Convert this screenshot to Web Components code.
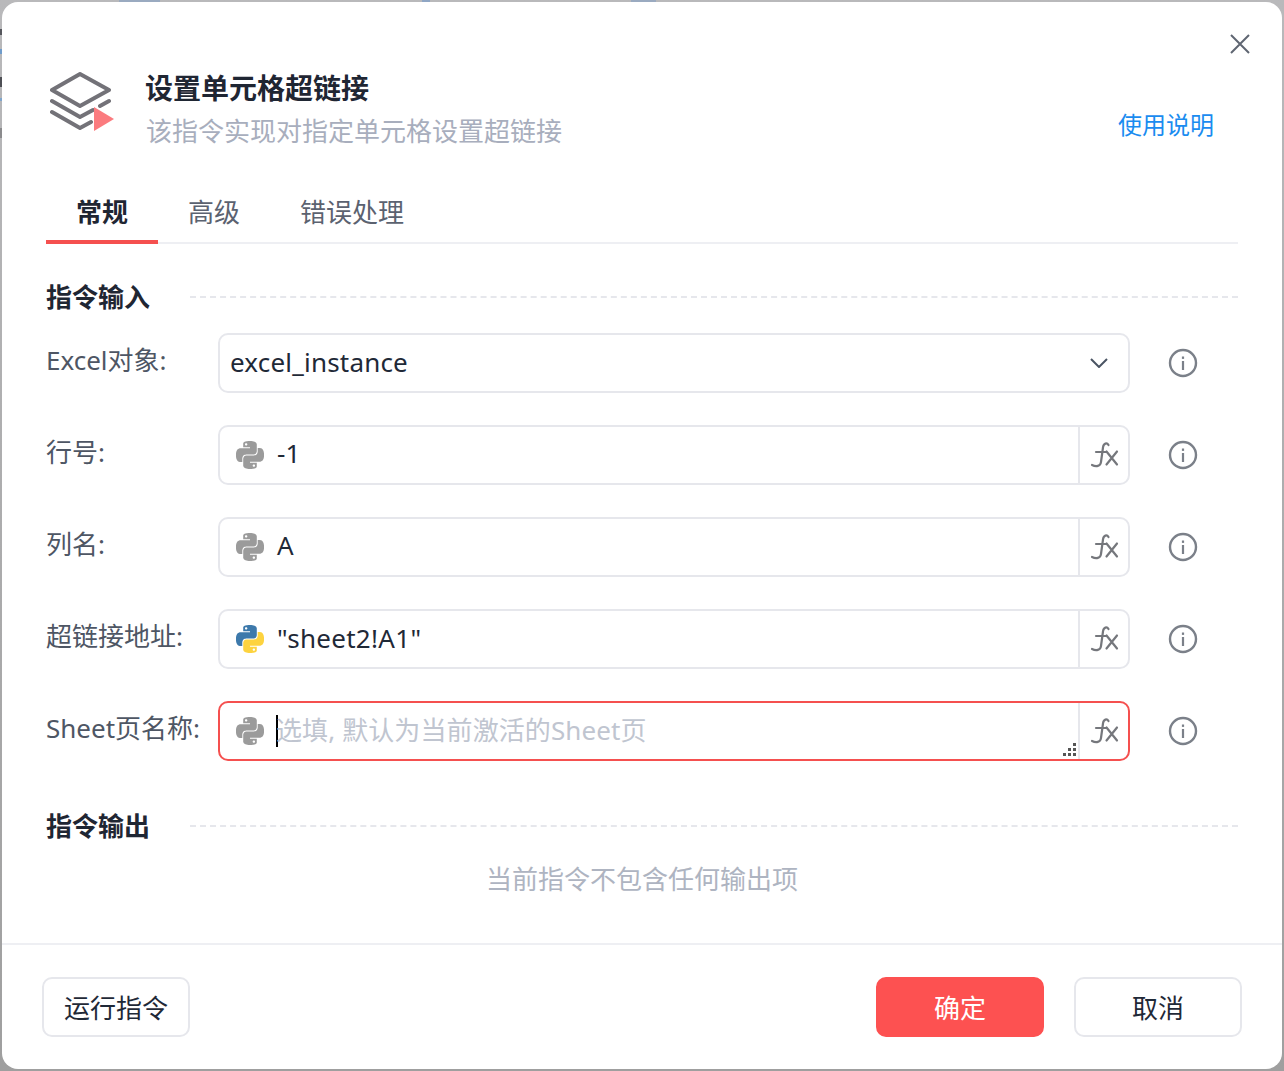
<!DOCTYPE html>
<html lang="zh">
<head>
<meta charset="utf-8">
<title>设置单元格超链接</title>
<style>
  html, body { margin: 0; height: 100%; }
  body {
    background-color: #a6a6a8;
    /* what shows of the blurred window behind the dialog */
    background-image:
      linear-gradient(to right, transparent 119px, #9aaac0 119px, #9aaac0 160px, transparent 160px, transparent 422px, #8fa6c4 422px, #8fa6c4 430px, transparent 430px, transparent 631px, #9aaac0 631px, #9aaac0 656px, transparent 656px),
      linear-gradient(to bottom, transparent 29px, #55565c 29px, #55565c 35px, transparent 35px, transparent 49px, #6f9ccb 49px, #6f9ccb 54px, transparent 54px, transparent 77px, #4d4e54 77px, #4d4e54 87px, transparent 87px, transparent 98px, #7fa5cc 98px, #7fa5cc 101px, transparent 101px, transparent 128px, #8b8b8d 128px, #8b8b8d 138px, transparent 138px),
      linear-gradient(to bottom, #b9b9bb, #9f9f9f);
    background-size: 100% 2px, 2px 100%, 100% 100%;
    background-repeat: no-repeat;
    font-family: "Noto Sans", "Noto Sans CJK SC", sans-serif;
    color: #1f2937;
    overflow: hidden;
  }
</style>
</head>
<body>

<cmd-dialog>
  <cmd-header slot="header" heading="设置单元格超链接" sub="该指令实现对指定单元格设置超链接" link="使用说明"></cmd-header>
  <cmd-tabs slot="tabs"></cmd-tabs>

  <cmd-section heading="指令输入" first>
    <cmd-field label="Excel对象:" type="select" value="excel_instance"></cmd-field>
    <cmd-field label="行号:" value="-1"></cmd-field>
    <cmd-field label="列名:" value="A"></cmd-field>
    <cmd-field label="超链接地址:" value="&quot;sheet2!A1&quot;" py="color"></cmd-field>
    <cmd-field label="Sheet页名称:" placeholder="选填, 默认为当前激活的Sheet页" focused></cmd-field>
  </cmd-section>

  <cmd-section heading="指令输出">
    <div style="text-align:center;font-size:26px;line-height:36px;color:#aeb4c1;margin-top:-1px;">当前指令不包含任何输出项</div>
  </cmd-section>

  <cmd-button slot="footer-left">运行指令</cmd-button>
  <cmd-button slot="footer-right" primary>确定</cmd-button>
  <cmd-button slot="footer-right">取消</cmd-button>
</cmd-dialog>

<script>
// python logo, grey or coloured
function pyLogo(color) {
  const top = color ? '#3d79ab' : '#9b9b9b';
  const bottom = color ? '#fdd33f' : '#9b9b9b';
  return `<svg width="28" height="28" viewBox="0 0 24 24" fill-rule="evenodd">
    <path fill="${top}" d="M14.25.18l.9.2.73.26.59.3.45.32.34.34.25.34.16.33.1.3.04.26.02.2-.01.13V8.5l-.05.63-.13.55-.21.46-.26.38-.3.31-.33.25-.35.19-.35.14-.33.1-.3.07-.26.04-.21.02H8.77l-.69.05-.59.14-.5.22-.41.27-.33.32-.27.35-.2.36-.15.37-.1.35-.07.32-.04.27-.02.21v3.06H3.17l-.21-.03-.28-.07-.32-.12-.35-.18-.36-.26-.36-.36-.35-.46-.32-.59-.28-.73-.21-.88-.14-1.05-.05-1.23.06-1.22.16-1.04.24-.87.32-.71.36-.57.4-.44.42-.33.42-.24.4-.16.36-.1.32-.05.24-.01h.16l.06.01h8.16v-.83H6.18l-.01-2.75-.02-.37.05-.34.11-.31.17-.28.25-.26.31-.23.38-.2.44-.18.51-.15.58-.12.64-.1.71-.06.77-.04.84-.02 1.27.05zm-6.3 1.98l-.23.33-.08.41.08.41.23.34.33.22.41.09.41-.09.33-.22.23-.34.08-.41-.08-.41-.23-.33-.33-.22-.41-.09-.41.09z"/>
    <path fill="${bottom}" d="M21.04 6.11l.28.06.32.12.35.18.36.27.36.35.35.47.32.59.28.73.21.88.14 1.04.05 1.23-.06 1.23-.16 1.04-.24.86-.32.71-.36.57-.4.45-.42.33-.42.24-.4.16-.36.09-.32.05-.24.02-.16-.01h-8.22v.82h5.84l.01 2.76.02.36-.05.34-.11.31-.17.29-.25.25-.31.24-.38.2-.44.17-.51.15-.58.13-.64.09-.71.07-.77.04-.84.01-1.27-.04-1.07-.14-.9-.2-.73-.25-.59-.3-.45-.33-.34-.34-.25-.34-.16-.33-.1-.3-.04-.25-.02-.2.01-.13v-5.34l.05-.64.13-.54.21-.46.26-.38.3-.32.33-.24.35-.2.35-.14.33-.1.3-.06.26-.04.21-.02.13-.01h5.84l.69-.05.59-.14.5-.21.41-.28.33-.32.27-.35.2-.36.15-.36.1-.35.07-.32.04-.28.02-.21V6.07h2.09l.14.01zM14.57 20.36l-.23.33-.08.41.08.41.23.33.33.23.41.08.41-.08.33-.23.23-.33.08-.41-.08-.41-.23-.33-.33-.23-.41-.08-.41.08z"/>
  </svg>`;
}

class CmdDialog extends HTMLElement {
  constructor() {
    super();
    this.attachShadow({ mode: 'open' });
    this.shadowRoot.innerHTML = `
      <style>
        :host {
          display: flex;
          flex-direction: column;
          box-sizing: border-box;
          margin: 2px;
          height: 1067px;
          background: #fff;
          border-radius: 16px;
          overflow: hidden;
        }
        .body { flex: 1; padding: 0 44px; }
        .footer {
          height: 126px;
          box-sizing: border-box;
          border-top: 2px solid #eeeff3;
          padding: 32px 40px 0;
          display: flex;
          justify-content: space-between;
        }
        .right { display: flex; gap: 30px; }
      </style>
      <slot name="header"></slot>
      <div class="body">
        <slot name="tabs"></slot>
        <slot></slot>
      </div>
      <div class="footer">
        <div><slot name="footer-left"></slot></div>
        <div class="right"><slot name="footer-right"></slot></div>
      </div>`;
  }
}

class CmdHeader extends HTMLElement {
  constructor() {
    super();
    this.attachShadow({ mode: 'open' });
    this.shadowRoot.innerHTML = `
      <style>
        :host { display: block; position: relative; height: 178px; box-sizing: border-box; padding: 66px 68px 0 48px; }
        .row { display: flex; align-items: flex-start; }
        svg.logo { flex: none; margin-right: 30px; margin-top: 4px; }
        .text { flex: 1; }
        h1 { margin: 0 0 0 -1px; font-size: 28px; line-height: 40px; font-weight: 700; color: #1f2633; }
        p { margin: 3px 0 0; font-size: 26px; line-height: 40px; color: #a8aebd; }
        a { align-self: flex-start; margin-top: 37px; font-size: 24px; line-height: 40px; color: #1a8cf0; text-decoration: none; }
        .close { position: absolute; top: 32px; right: 32px; }
      </style>
      <svg class="close" width="20" height="20" viewBox="0 0 20 20"><path d="M1 1l18 18M19 1L1 19" stroke="#5f6672" stroke-width="2" fill="none"/></svg>
      <div class="row">
        <svg class="logo" width="66" height="60" viewBox="0 0 66 60">
          <g fill="none" stroke="#737278" stroke-width="4" stroke-linejoin="round" stroke-linecap="round">
            <path d="M30 2L59 18 30 34 2 18z"/>
            <path d="M2 29l28 16 13-7M50 34l9-5"/>
            <path d="M2 40l28 16 11-6"/>
          </g>
          <path d="M44 37l20 12-20 12z" fill="#fb7b7f" transform="translate(0 -2)"/>
        </svg>
        <div class="text">
          <h1>${this.getAttribute('heading')}</h1>
          <p>${this.getAttribute('sub')}</p>
        </div>
        <a href="#">${this.getAttribute('link')}</a>
      </div>`;
  }
}

class CmdTabs extends HTMLElement {
  constructor() {
    super();
    this.attachShadow({ mode: 'open' });
    this.shadowRoot.innerHTML = `
      <style>
        :host { display: flex; height: 64px; box-sizing: border-box; border-bottom: 2px solid #eeeff3; font-size: 26px; color: #5b6270; }
        .tab { box-sizing: border-box; height: 64px; padding: 14px 30px 0; line-height: 36px; }
        .on { font-weight: 700; color: #1f2633; border-bottom: 4px solid #f5504f; }
      </style>
      <div class="tab on">常规</div>
      <div class="tab">高级</div>
      <div class="tab">错误处理</div>`;
  }
}

class CmdSection extends HTMLElement {
  constructor() {
    super();
    this.attachShadow({ mode: 'open' });
    const first = this.hasAttribute('first');
    this.shadowRoot.innerHTML = `
      <style>
        :host { display: block; padding-top: ${first ? 35 : 47}px; }
        .title { display: flex; align-items: center; gap: 40px; height: 36px; font-size: 26px; font-weight: 700; color: #1f2633; }
        .title span { margin-top: -2px; }
        .title i { flex: 1; border-top: 2px dashed #e6e7ec; }
        .list { display: flex; flex-direction: column; gap: 32px; margin-top: 18px; }
      </style>
      <div class="title"><span>${this.getAttribute('heading')}</span><i></i></div>
      <div class="list"><slot></slot></div>`;
  }
}

class CmdField extends HTMLElement {
  constructor() {
    super();
    this.attachShadow({ mode: 'open' });
    const isSelect = this.getAttribute('type') === 'select';
    const focused = this.hasAttribute('focused');
    const value = this.getAttribute('value') || '';
    const placeholder = this.getAttribute('placeholder') || '';
    const color = this.getAttribute('py') === 'color';
    const content = isSelect
      ? `<span class="val low">${value}</span>
         <svg class="chev" width="18" height="10" viewBox="0 0 18 10"><path d="M1 1l8 8 8-8" fill="none" stroke="#4a5463" stroke-width="2"/></svg>`
      : `<span class="py">${pyLogo(color)}</span>
         ${focused ? '<span class="caret"></span>' : ''}
         <span class="val${placeholder ? ' ph' : ''}${color ? ' low wide' : ''}">${placeholder || value.replace(/"/g, '&quot;')}</span>
         ${focused ? `<svg class="grip" width="16" height="16" viewBox="0 0 16 16" fill="#555"><rect x="12" y="2" width="3" height="3"/><rect x="7" y="7" width="3" height="3"/><rect x="12" y="7" width="3" height="3"/><rect x="2" y="12" width="3" height="3"/><rect x="7" y="12" width="3" height="3"/><rect x="12" y="12" width="3" height="3"/></svg>` : ''}
         <span class="fx"><svg width="30" height="28" viewBox="0 0 30 28" fill="none" stroke="#75777c" stroke-width="2.200" stroke-linecap="round"><path d="M19.500 4C18 1.500 14.500 2 14 6.500L12 21C11.500 25.500 7 26 3 24"/><path d="M7 11h10"/><path d="M17.500 10.500l10.500 13M28 10.500l-10.500 13"/></svg></span>`;
    this.shadowRoot.innerHTML = `
      <style>
        :host { display: grid; grid-template-columns: 172px 912px 1fr; align-items: center; height: 60px; }
        .label { font-size: 26px; line-height: 36px; color: #4e5664; white-space: nowrap; margin-top: -6px; }
        .box {
          position: relative;
          display: flex;
          align-items: center;
          box-sizing: border-box;
          height: 60px;
          border: 2px solid ${focused ? '#f5504f' : '#e6e7ec'};
          border-radius: 10px;
          padding-left: ${isSelect ? 10 : 16}px;
          font-size: 26px;
          color: #1f2937;
        }
        .py { display: flex; margin-right: 13px; }
        .val { flex: 1; white-space: nowrap; letter-spacing: .2px; margin-top: -4px; }
        .low { margin-top: -2px; }
        .wide { letter-spacing: .3px; }
        .ph { color: #c0c5d0; letter-spacing: .1px; margin-left: -2px; }
        .caret { width: 2px; height: 32px; background: #000; flex: none; margin-left: -1px; }
        .chev { margin-right: 20px; }
        .fx { flex: none; width: 48px; align-self: stretch; border-left: 2px solid #e6e7ec; display: flex; align-items: center; justify-content: center; }
        .grip { position: absolute; right: 51px; bottom: 2px; }
        .info { margin-left: 38px; display: flex; }
      </style>
      <div class="label">${this.getAttribute('label')}</div>
      <div class="box">${content}</div>
      <div class="info"><svg width="30" height="30" viewBox="0 0 30 30"><circle cx="15" cy="15" r="13" fill="none" stroke="#7b8089" stroke-width="2.400"/><rect x="13.900" y="13" width="2.200" height="9" fill="#7b8089"/><rect x="13.900" y="8.500" width="2.200" height="2.400" fill="#7b8089"/></svg></div>`;
  }
}

class CmdButton extends HTMLElement {
  constructor() {
    super();
    this.attachShadow({ mode: 'open' });
    const primary = this.hasAttribute('primary');
    this.shadowRoot.innerHTML = `
      <style>
        :host { display: block; }
        button {
          box-sizing: border-box;
          height: 60px;
          min-width: ${this.slot === 'footer-right' ? 168 : 148}px;
          padding: 0;
          font: inherit;
          font-size: 26px;
          border-radius: 10px;
          border: 2px solid ${primary ? '#fd5151' : '#e6e7ec'};
          background: ${primary ? '#fd5151' : '#fff'};
          color: ${primary ? '#fff' : '#1f2937'};
        }
      </style>
      <button><slot></slot></button>`;
  }
}

customElements.define('cmd-dialog', CmdDialog);
customElements.define('cmd-header', CmdHeader);
customElements.define('cmd-tabs', CmdTabs);
customElements.define('cmd-section', CmdSection);
customElements.define('cmd-field', CmdField);
customElements.define('cmd-button', CmdButton);
</script>
</body>
</html>
